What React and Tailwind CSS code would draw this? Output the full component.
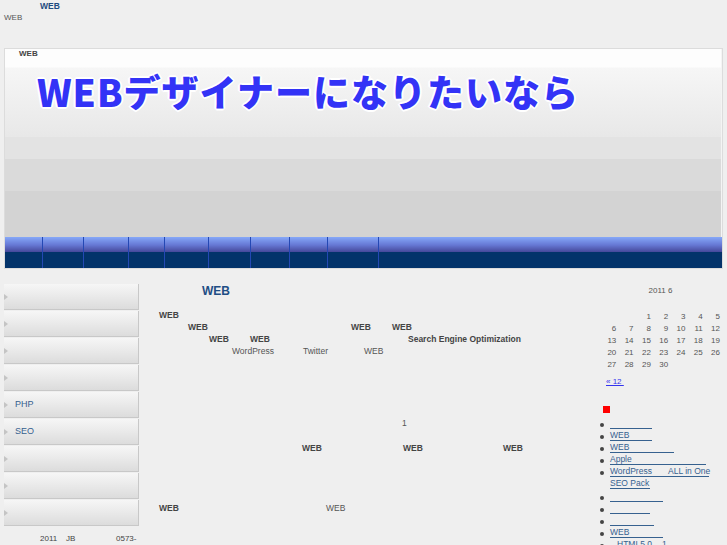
const menu = ['', '', '', '', 'PHP', 'SEO', '', '', ''];
const navWidths = ['w-[38px]', 'w-[41px]', 'w-[45px]', 'w-[36px]', 'w-[44px]', 'w-[42px]', 'w-[39px]', 'w-[38px]', 'w-[51px]'];
const weeks = [
  ['', '', '1', '2', '3', '4', '5'],
  ['6', '7', '8', '9', '10', '11', '12'],
  ['13', '14', '15', '16', '17', '18', '19'],
  ['20', '21', '22', '23', '24', '25', '26'],
  ['27', '28', '29', '30', '', '', ''],
];

function Bullet({ children }) {
  return (
    <li className="flex h-[12px] items-start">
      <span className="mt-[5px] mr-[6px] h-[4px] w-[4px] shrink-0 rounded-full bg-[#444]" />
      {children}
    </li>
  );
}

function Link({ w, children }) {
  return (
    <a className={`inline-block h-[11px] border-b border-[#36618f] leading-[10px] whitespace-nowrap text-[#36618f] ${w}`}>
      {children}
    </a>
  );
}

export default function App() {
  return (
    <div className="min-h-[545px] bg-[#efefef] font-['Liberation_Sans',Arial,sans-serif] text-[8.5px] text-[#555]">
      <div className="h-[48px]">
        <div className="h-[12px] pl-[40px] leading-[12px] font-bold text-[#1e4b80]">WEB</div>
        <div className="pl-[4px] text-[8px] leading-[12px] text-[#555]">WEB</div>
      </div>

      <div className="ml-[4px] w-[719px] border border-[#dcdcdc] bg-white">
        <div className="h-[188px] border-r border-[#f4f4f4] bg-[linear-gradient(#fdfdfd_0,#fdfdfd_18px,#f6f6f6_19px,#e8e8e8_88px,#e3e3e3_88px,#e3e3e3_110px,#dadada_110px,#dadada_142px,#d3d3d3_142px)] pl-[14px]">
          <div className="h-[10px] text-[8px] leading-[10px] font-bold text-[#444]">WEB</div>
          <div className="mt-[13px] pl-[18px] font-['Noto_Sans_CJK_JP',sans-serif] text-[37px] leading-[38px] font-black tracking-[1px] whitespace-nowrap text-[#3333f6] [text-shadow:0_0_2px_#fff,1px_1px_0_#fff,-1px_-1px_0_#fff,1px_-1px_0_#fff,-1px_1px_0_#fff,2px_0_0_#fff,-2px_0_0_#fff,0_2px_0_#fff,0_-2px_0_#fff]">
            WEBデザイナーになりたいなら
          </div>
        </div>
        <nav className="flex h-[31px] bg-[linear-gradient(#86a8f8,#6678d4_8px,#46489a_15px,#03336a_15px,#03336a)]">
          {navWidths.map((w, i) => (
            <div key={i} className={`h-full border-r border-[#2448b4] ${w}`} />
          ))}
        </nav>
      </div>

      <div className="flex items-start">
        <aside className="ml-[4px] w-[135px] pt-[15px]">
          <ul>
            {menu.map((label, i) => (
              <li
                key={i}
                className="relative mb-[1px] flex h-[26px] items-center border-b border-r border-[#c8c8c8] bg-[linear-gradient(#f6f6f6,#ececec_40%,#dcdcdc)] pl-[11px] text-[9px] text-[#36618f]"
              >
                <span className="absolute left-0 top-[10px] h-0 w-0 border-y-[3px] border-l-[4px] border-y-transparent border-l-[#c4c4c4]" />
                {label}
              </li>
            ))}
          </ul>
          <div className="mt-[7px] flex h-[12px] pl-[36px] text-[8px] leading-[12px] text-[#444]">
            <span className="w-[26px]">2011</span>
            <span className="w-[50px]">JB</span>
            <span>0573-</span>
          </div>
        </aside>

        <main className="ml-[20px] w-[441px] pt-[14px] text-[#444]">
          <h2 className="h-[16px] pl-[43px] text-[12px] leading-[16px] font-bold text-[#1f4e85]">WEB</h2>
          <div className="mt-[10px] leading-[12px] whitespace-nowrap">
            <div className="h-[12px] font-bold">WEB</div>
            <div className="flex h-[12px] pl-[29px] font-bold">
              <span className="w-[163px]">WEB</span>
              <span className="w-[41px]">WEB</span>
              <span>WEB</span>
            </div>
            <div className="flex h-[12px] pl-[50px] font-bold">
              <span className="w-[41px]">WEB</span>
              <span className="w-[158px]">WEB</span>
              <span>Search Engine Optimization</span>
            </div>
            <div className="flex h-[12px] pl-[73px] text-[#555]">
              <span className="w-[71px]">WordPress</span>
              <span className="w-[61px]">Twitter</span>
              <span>WEB</span>
            </div>
            <div className="mt-[60px] h-[12px] pl-[243px] text-[#555]">1</div>
            <div className="mt-[13px] flex h-[12px] pl-[143px] font-bold">
              <span className="w-[101px]">WEB</span>
              <span className="w-[100px]">WEB</span>
              <span>WEB</span>
            </div>
            <div className="mt-[48px] flex h-[12px]">
              <span className="w-[167px] font-bold">WEB</span>
              <span className="text-[#555]">WEB</span>
            </div>
          </div>
        </main>

        <aside className="w-[127px] pt-[16px] text-[8px] leading-[12px] text-[#555]">
          <div className="w-[121px] text-center">2011 6</div>
          <div className="mt-[14px] w-[121px]">
            {weeks.map((row, r) => (
              <div key={r} className="grid h-[12px] grid-cols-7">
                {row.map((d, c) => (
                  <span key={c} className="pr-[1px] text-right">{d}</span>
                ))}
              </div>
            ))}
          </div>
          <div className="mt-[5px] h-[12px] pl-[6px]">
            <a className="text-[#3333ee] underline">« 12&nbsp;</a>
          </div>
          <div className="mt-[18px] ml-[3px] h-[7px] w-[7px] bg-[#ff0000]" />
          <ul className="mt-[5px] text-[8.5px] leading-[10px]">
            <Bullet><Link w="w-[42px]"></Link></Bullet>
            <Bullet><Link w="w-[42px]">WEB</Link></Bullet>
            <Bullet><Link w="w-[64px]">WEB</Link></Bullet>
            <Bullet><Link w="w-[96px]">Apple</Link></Bullet>
            <li className="flex h-[25px] items-start">
              <span className="mt-[5px] mr-[6px] h-[4px] w-[4px] shrink-0 rounded-full bg-[#444]" />
              <div>
                <Link w="w-[99px]"><span className="inline-block w-[58px]">WordPress</span>ALL in One</Link>
                <div className="mt-[1px]"><Link w="w-[40px]">SEO Pack</Link></div>
              </div>
            </li>
            <Bullet><Link w="w-[53px]"></Link></Bullet>
            <Bullet><Link w="w-[40px]"></Link></Bullet>
            <Bullet><Link w="w-[44px]"></Link></Bullet>
            <Bullet><Link w="w-[53px]">WEB</Link></Bullet>
            <Bullet><Link w="w-[60px] pl-[7px]"><span className="inline-block w-[45px]">HTML5.0</span>1</Link></Bullet>
          </ul>
        </aside>
      </div>
    </div>
  );
}
